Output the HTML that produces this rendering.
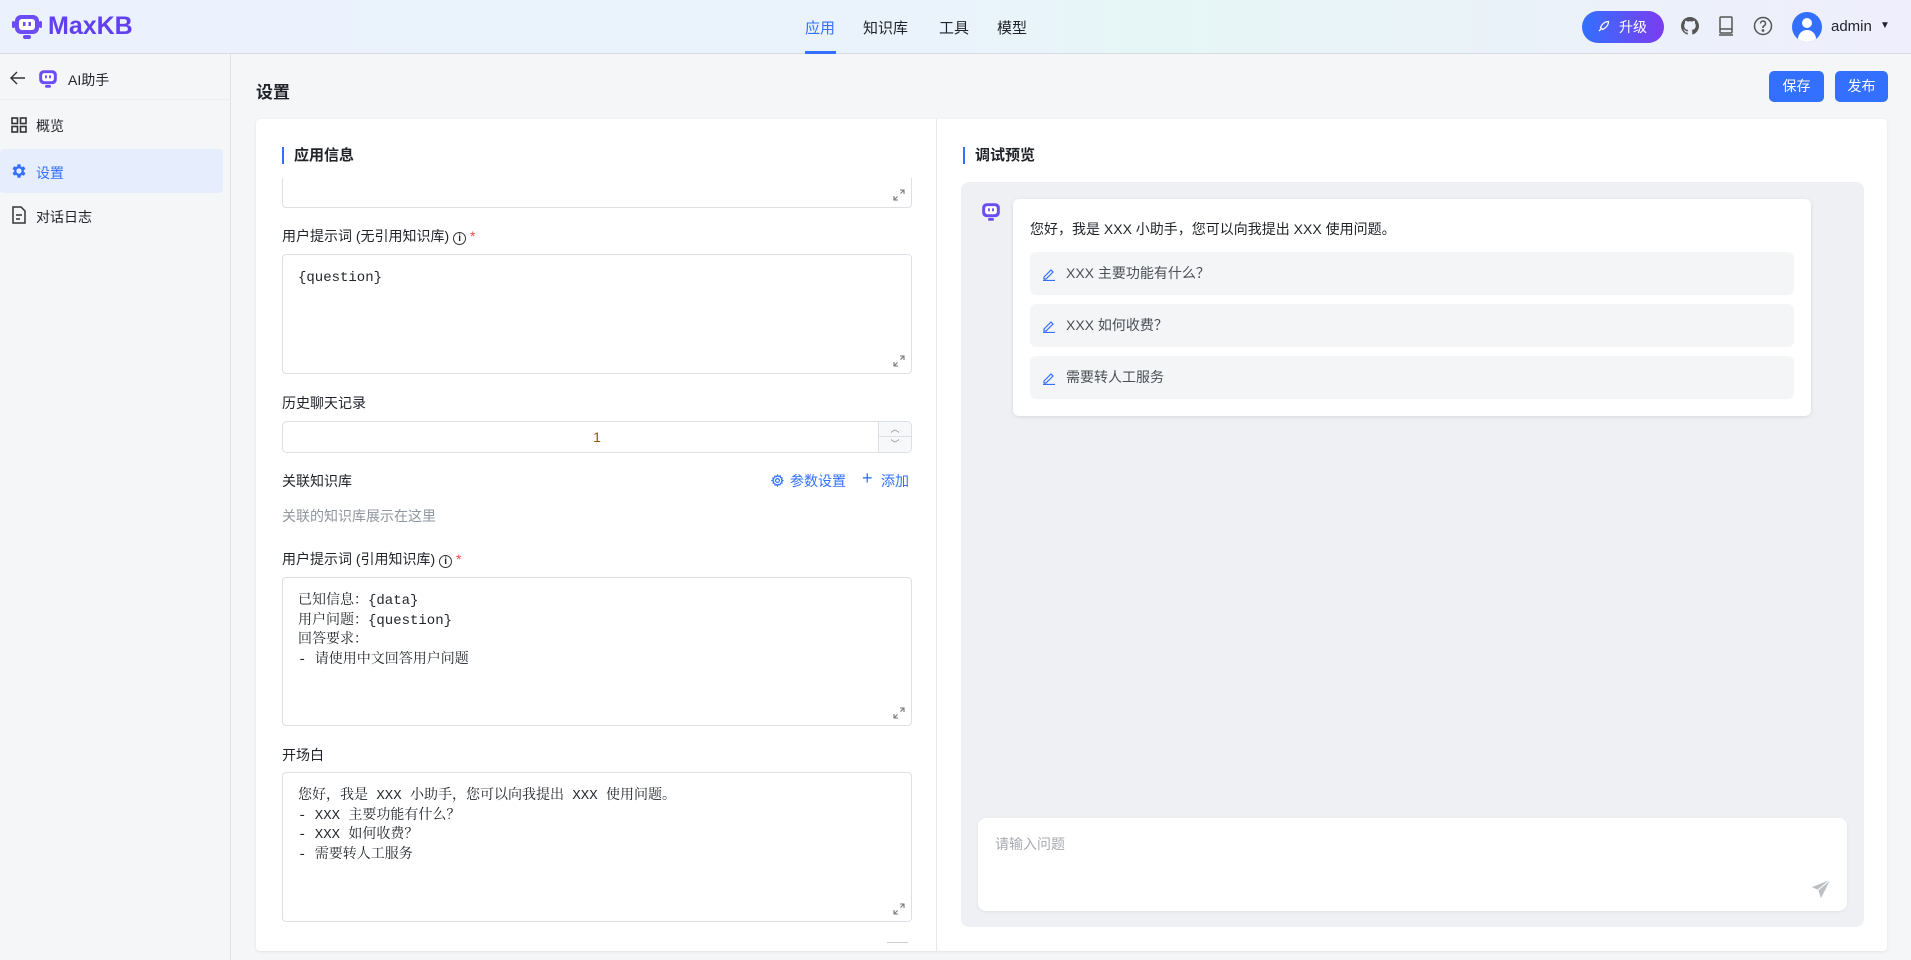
<!DOCTYPE html>
<html><head><meta charset="utf-8"><style>
*{box-sizing:border-box;margin:0;padding:0}
body{width:1911px;height:960px;overflow:hidden;background:#f5f6f7;font-family:"Liberation Sans","Noto Sans CJK SC",sans-serif;font-size:14px;color:#1f2329;position:relative}
.a{position:absolute}
.hdr{left:0;top:0;width:1911px;height:54px;background:linear-gradient(90deg,#ebf1fd 0%,#eaf3fc 50%,#e6f6f6 60%,#efeefc 100%);border-bottom:1px solid #d8dbe1}
.nav{top:17px;font-size:15px;color:#1f2329}
.side{left:0;top:54px;width:231px;height:906px;background:#f5f6f7;border-right:1px solid #dee0e3}
.si{left:36px;font-size:14px}
.card{left:256px;top:119px;width:1631px;height:832px;background:#fff;border-radius:4px;box-shadow:0 1px 3px rgba(0,0,0,.08)}
.lbl{left:282px;font-size:14px;color:#1f2329}
.ta{left:282px;width:630px;border:1px solid #dcdfe6;border-radius:4px;background:#fff;padding:14px 15px;font-family:"Liberation Mono","Noto Serif CJK SC",monospace;font-size:14px;line-height:19.5px;color:#1f2329;white-space:pre}
.exp{position:absolute;right:6px;bottom:6px;width:12px;height:12px}
.sec{font-size:15px;font-weight:bold;padding-left:10px;border-left:2px solid #3370ff;line-height:17px}
.sug{left:1030px;width:764px;height:43px;background:#f4f5f7;border-radius:6px;padding-left:36px;line-height:43px;color:#4a4f57;font-size:14px}
.sug svg{position:absolute;left:12px;top:15px}
.btn{background:#3370ff;color:#fff;border-radius:5px;text-align:center;font-size:14px}
</style></head><body>
<div class="a hdr"></div>
<svg class="a" style="left:12px;top:14px" width="30" height="26" viewBox="0 0 30 26"><rect x="3" y="1" width="24" height="19" rx="6" fill="#6b4cf5"/><rect x="0" y="7" width="3" height="7" rx="1.5" fill="#6b4cf5"/><rect x="27" y="7" width="3" height="7" rx="1.5" fill="#6b4cf5"/><rect x="7" y="5" width="16" height="11" rx="3" fill="#fff"/><rect x="11" y="8" width="2.5" height="4" fill="#6b4cf5"/><rect x="16.5" y="8" width="2.5" height="4" fill="#6b4cf5"/><rect x="11" y="21" width="8" height="4" rx="2" fill="#6b4cf5"/></svg>
<div class="a" style="left:48px;top:12px;font-size:25px;font-weight:bold;color:#6240f0;letter-spacing:0">MaxKB</div>
<div class="a nav" style="left:805px;color:#3370ff">应用</div>
<div class="a" style="left:805px;top:51px;width:31px;height:3px;background:#3370ff"></div>
<div class="a nav" style="left:863px">知识库</div>
<div class="a nav" style="left:939px">工具</div>
<div class="a nav" style="left:997px">模型</div>
<div class="a" style="left:1582px;top:11px;width:82px;height:32px;border-radius:16px;background:linear-gradient(90deg,#3370ff,#7b3cf0);color:#fff;font-size:14px;line-height:32px;padding-left:37px">升级</div>
<svg class="a" style="left:1596px;top:20px" width="14" height="14" viewBox="0 0 14 14" fill="none" stroke="#fff" stroke-width="1.3"><path d="M5 9L3 11M12.5 1.5C9 1.5 6 4 4.5 7.5L6.5 9.5C10 8 12.5 5 12.5 1.5Z"/></svg>
<svg class="a" style="left:1681px;top:17px" width="18" height="18" viewBox="0 0 16 16"><path fill="#555" d="M8 0C3.6 0 0 3.6 0 8c0 3.5 2.3 6.5 5.5 7.6.4.1.5-.2.5-.4v-1.4c-2.2.5-2.7-1-2.7-1-.4-.9-.9-1.2-.9-1.2-.7-.5.1-.5.1-.5.8.1 1.2.8 1.2.8.7 1.2 1.9.9 2.3.7.1-.5.3-.9.5-1.1-1.8-.2-3.6-.9-3.6-4 0-.9.3-1.6.8-2.1-.1-.2-.4-1 .1-2.1 0 0 .7-.2 2.2.8.6-.2 1.3-.3 2-.3s1.4.1 2 .3c1.5-1 2.2-.8 2.2-.8.4 1.1.2 1.9.1 2.1.5.6.8 1.3.8 2.1 0 3.1-1.9 3.7-3.6 3.9.3.3.5.8.5 1.5v2.2c0 .2.1.5.6.4C13.7 14.5 16 11.5 16 8c0-4.4-3.6-8-8-8z"/></svg>
<svg class="a" style="left:1717px;top:16px" width="18" height="20" viewBox="0 0 18 20" fill="none" stroke="#555" stroke-width="1.5"><rect x="3" y="1" width="12" height="16" rx="1"/><path d="M3 13h12M2 19h14"/></svg>
<svg class="a" style="left:1753px;top:16px" width="20" height="20" viewBox="0 0 20 20" fill="none" stroke="#555" stroke-width="1.5"><circle cx="10" cy="10" r="8.5"/><path d="M7.5 7.5a2.5 2.5 0 1 1 3.5 2.3c-.7.3-1 .8-1 1.5v.7"/><circle cx="10" cy="14.5" r=".6" fill="#555"/></svg>
<div class="a" style="left:1792px;top:12px;width:30px;height:30px;border-radius:50%;background:#3370ff;overflow:hidden"><div class="a" style="left:10px;top:6px;width:10px;height:10px;border-radius:50%;background:#fff"></div><div class="a" style="left:6px;top:18px;width:18px;height:14px;border-radius:9px 9px 0 0;background:#fff"></div></div>
<div class="a" style="left:1831px;top:18px;font-size:15px;color:#1f2329">admin</div>
<div class="a" style="left:1880px;top:20px;font-size:10px">▼</div>

<div class="a side"></div>
<svg class="a" style="left:10px;top:71px" width="16" height="14" viewBox="0 0 16 14" fill="none" stroke="#333" stroke-width="1.4"><path d="M15 7H2M7 1L1 7l6 6"/></svg>
<svg class="a" style="left:37px;top:69px" width="22" height="20" viewBox="0 0 30 26"><rect x="3" y="1" width="24" height="19" rx="6" fill="#6b4cf5"/><rect x="7" y="5" width="16" height="11" rx="3" fill="#fff"/><rect x="11" y="8" width="2.5" height="4" fill="#6b4cf5"/><rect x="16.5" y="8" width="2.5" height="4" fill="#6b4cf5"/><rect x="11" y="21" width="8" height="4" rx="2" fill="#6b4cf5"/></svg>
<div class="a" style="left:68px;top:70px;font-size:14px">AI助手</div>
<div class="a" style="left:0;top:99px;width:231px;height:1px;background:#eceef1"></div>
<svg class="a" style="left:11px;top:117px" width="16" height="16" viewBox="0 0 16 16" fill="none" stroke="#333" stroke-width="1.6"><rect x="1" y="1" width="5.5" height="5.5"/><rect x="9.5" y="1" width="5.5" height="5.5"/><rect x="1" y="9.5" width="5.5" height="5.5"/><rect x="9.5" y="9.5" width="5.5" height="5.5"/></svg>
<div class="a si" style="top:116px">概览</div>
<div class="a" style="left:0;top:149px;width:223px;height:44px;background:#e6eefd;border-radius:4px"></div>
<svg class="a" style="left:10px;top:162px" width="18" height="18" viewBox="0 0 24 24"><path fill="#3370ff" d="M19.4 13a7.5 7.5 0 0 0 0-2l2.1-1.6-2-3.5-2.5 1a7 7 0 0 0-1.7-1L15 3h-4l-.4 2.7a7 7 0 0 0-1.7 1l-2.5-1-2 3.5L6.6 11a7.5 7.5 0 0 0 0 2l-2.2 1.6 2 3.5 2.5-1c.5.4 1.1.7 1.7 1L11 21h4l.4-2.7c.6-.3 1.2-.6 1.7-1l2.5 1 2-3.5zM13 15.5a3.5 3.5 0 1 1 0-7 3.5 3.5 0 0 1 0 7z" transform="translate(-1 0)"/></svg>
<div class="a si" style="top:163px;color:#3370ff">设置</div>
<svg class="a" style="left:12px;top:206px" width="14" height="18" viewBox="0 0 14 18" fill="none" stroke="#333" stroke-width="1.5"><path d="M1 1h8l4 4v12H1z"/><path d="M4 9h6M4 13h4"/></svg>
<div class="a si" style="top:207px">对话日志</div>

<div class="a" style="left:256px;top:78px;font-size:17px;font-weight:bold">设置</div>
<div class="a btn" style="left:1769px;top:71px;width:55px;height:31px;line-height:31px">保存</div>
<div class="a btn" style="left:1835px;top:71px;width:53px;height:31px;line-height:31px">发布</div>

<div class="a card"></div>
<div class="a" style="left:936px;top:119px;width:1px;height:832px;background:#e6e8eb"></div>
<div class="a sec" style="left:282px;top:147px">应用信息</div>
<div class="a ta" style="top:178px;height:30px;border-top:none;border-radius:0 0 4px 4px"><svg class="exp" viewBox="0 0 12 12" fill="none" stroke="#777" stroke-width="1.1"><path d="M7 1h4v4M5 11H1V7M11 1L7.5 4.5M1 11l3.5-3.5"/></svg></div>
<div class="a lbl" style="top:226px">用户提示词 (无引用知识库) <span style="border:1.3px solid #333;border-radius:50%;display:inline-block;width:13px;height:13px;font-size:10px;line-height:11px;text-align:center;font-weight:bold">i</span> <span style="color:#f54a45">*</span></div>
<div class="a ta" style="top:254px;height:120px">{question}<svg class="exp" viewBox="0 0 12 12" fill="none" stroke="#777" stroke-width="1.1"><path d="M7 1h4v4M5 11H1V7M11 1L7.5 4.5M1 11l3.5-3.5"/></svg></div>
<div class="a lbl" style="top:393px">历史聊天记录</div>
<div class="a" style="left:282px;top:421px;width:630px;height:32px;border:1px solid #dcdfe6;border-radius:5px;text-align:center;line-height:30px;color:#8a5a00;font-size:14px">1</div>
<div class="a" style="left:878px;top:422px;width:33px;height:30px;border-left:1px solid #dcdfe6;background:#f7f8fa;border-radius:0 5px 5px 0"><div style="height:15px;border-bottom:1px solid #dcdfe6;text-align:center;font-size:9px;color:#888;line-height:15px">︿</div><div style="text-align:center;font-size:9px;color:#888;line-height:15px">﹀</div></div>
<div class="a lbl" style="top:471px">关联知识库</div>
<svg class="a" style="left:771px;top:474px" width="13" height="13" viewBox="0 0 24 24" fill="none" stroke="#3370ff" stroke-width="2.2"><circle cx="12" cy="12" r="3.5"/><path d="M12 2l2 2.5 3-1 .5 3 3 1-1 3L22 12l-2.5 1.5 1 3-3 .5-1 3-3-1L12 22l-1.5-2.5-3 1-.5-3-3-1 1-3L2 12l2.5-1.5-1-3 3-.5 1-3 3 1z"/></svg>
<div class="a" style="left:790px;top:471px;color:#3370ff">参数设置</div>
<div class="a" style="left:862px;top:468px;color:#3370ff;font-size:18px">+</div>
<div class="a" style="left:881px;top:471px;color:#3370ff">添加</div>
<div class="a lbl" style="top:506px;color:#8f959e">关联的知识库展示在这里</div>
<div class="a lbl" style="top:549px">用户提示词 (引用知识库) <span style="border:1.3px solid #333;border-radius:50%;display:inline-block;width:13px;height:13px;font-size:10px;line-height:11px;text-align:center;font-weight:bold">i</span> <span style="color:#f54a45">*</span></div>
<div class="a ta" style="top:577px;height:149px">已知信息：{data}
用户问题：{question}
回答要求：
- 请使用中文回答用户问题<svg class="exp" viewBox="0 0 12 12" fill="none" stroke="#777" stroke-width="1.1"><path d="M7 1h4v4M5 11H1V7M11 1L7.5 4.5M1 11l3.5-3.5"/></svg></div>
<div class="a lbl" style="top:745px">开场白</div>
<div class="a ta" style="top:772px;height:150px">您好，我是 XXX 小助手，您可以向我提出 XXX 使用问题。
- XXX 主要功能有什么？
- XXX 如何收费？
- 需要转人工服务<svg class="exp" viewBox="0 0 12 12" fill="none" stroke="#777" stroke-width="1.1"><path d="M7 1h4v4M5 11H1V7M11 1L7.5 4.5M1 11l3.5-3.5"/></svg></div>
<div class="a" style="left:887px;top:942px;width:21px;height:1px;background:#ccc"></div>

<div class="a sec" style="left:963px;top:147px">调试预览</div>
<div class="a" style="left:961px;top:182px;width:903px;height:745px;background:#eef0f3;border-radius:8px"></div>
<svg class="a" style="left:980px;top:202px" width="22" height="20" viewBox="0 0 30 26"><rect x="3" y="1" width="24" height="19" rx="6" fill="#6b4cf5"/><rect x="7" y="5" width="16" height="11" rx="3" fill="#fff"/><rect x="11" y="8" width="2.5" height="4" fill="#6b4cf5"/><rect x="16.5" y="8" width="2.5" height="4" fill="#6b4cf5"/><rect x="11" y="21" width="8" height="4" rx="2" fill="#6b4cf5"/></svg>
<div class="a" style="left:1013px;top:199px;width:798px;height:217px;background:#fff;border-radius:6px;box-shadow:0 1px 4px rgba(0,0,0,.1)"></div>
<div class="a" style="left:1030px;top:219px;font-size:14px">您好，我是 XXX 小助手，您可以向我提出 XXX 使用问题。</div>
<div class="a sug" style="top:252px"><svg width="14" height="14" viewBox="0 0 14 14" fill="none" stroke="#3370ff" stroke-width="1.2"><path d="M2 10L9 3l2 2-7 7H2zM1 13.5h12"/></svg>XXX 主要功能有什么？</div>
<div class="a sug" style="top:304px"><svg width="14" height="14" viewBox="0 0 14 14" fill="none" stroke="#3370ff" stroke-width="1.2"><path d="M2 10L9 3l2 2-7 7H2zM1 13.5h12"/></svg>XXX 如何收费？</div>
<div class="a sug" style="top:356px"><svg width="14" height="14" viewBox="0 0 14 14" fill="none" stroke="#3370ff" stroke-width="1.2"><path d="M2 10L9 3l2 2-7 7H2zM1 13.5h12"/></svg>需要转人工服务</div>
<div class="a" style="left:978px;top:818px;width:869px;height:93px;background:#fff;border-radius:8px;box-shadow:0 1px 3px rgba(0,0,0,.06)"></div>
<div class="a" style="left:995px;top:834px;color:#a8abb2;font-size:14px">请输入问题</div>
<svg class="a" style="left:1810px;top:878px" width="22" height="22" viewBox="0 0 24 24"><path fill="#bbbfc4" d="M22 2L2 10l7 3 3 9zM9 13l13-11"/><path d="M9 13L22 2" stroke="#fff" stroke-width="1.2"/></svg>
</body></html>
